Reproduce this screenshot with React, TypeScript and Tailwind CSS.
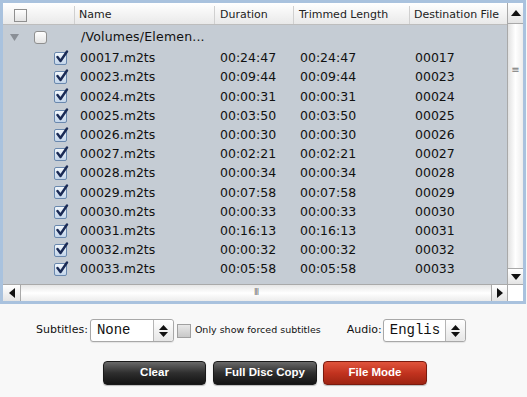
import React from "react";

const files: [string, string, string][] = [
  ["00017.m2ts", "00:24:47", "00017"],
  ["00023.m2ts", "00:09:44", "00023"],
  ["00024.m2ts", "00:00:31", "00024"],
  ["00025.m2ts", "00:03:50", "00025"],
  ["00026.m2ts", "00:00:30", "00026"],
  ["00027.m2ts", "00:02:21", "00027"],
  ["00028.m2ts", "00:00:34", "00028"],
  ["00029.m2ts", "00:07:58", "00029"],
  ["00030.m2ts", "00:00:33", "00030"],
  ["00031.m2ts", "00:16:13", "00031"],
  ["00032.m2ts", "00:00:32", "00032"],
  ["00033.m2ts", "00:05:58", "00033"],
];

function Tri({ dir }: { dir: "up" | "down" | "left" | "right" }) {
  const pts = {
    up: "0,7 5,1 10,7",
    down: "0,1 10,1 5,7",
    left: "7,0 7,10 1,5",
    right: "1,0 1,10 7,5",
  }[dir];
  const vert = dir === "up" || dir === "down";
  return (
    <svg width={vert ? 10 : 8} height={vert ? 8 : 10} viewBox={vert ? "0 0 10 8" : "0 0 8 10"}>
      <polygon points={pts} fill="#111" />
    </svg>
  );
}

function Check() {
  return (
    <div className="w-[13px] h-[13px] rounded-[2px] border border-[#6a88ae] bg-gradient-to-b from-[#f2f7fc] to-[#c3d5ea] relative">
      <svg className="absolute -top-[3px] left-[0px]" width="14" height="14" viewBox="0 0 14 14">
        <path d="M2.5 7 L5.5 11 L12 1.5" stroke="#1a2a55" strokeWidth="2.4" fill="none" strokeLinecap="round" strokeLinejoin="round" />
      </svg>
    </div>
  );
}

function Box({ round }: { round?: boolean }) {
  return (
    <div
      className={`w-[13px] h-[13px] border border-[#8f8f8f] bg-gradient-to-b from-white to-[#e4e4e4] ${
        round ? "rounded-[3px]" : ""
      }`}
    />
  );
}

function Stepper() {
  return (
    <div className="w-[20px] h-full border-l border-[#b5b5b5] flex flex-col items-center justify-center gap-[2px] bg-gradient-to-b from-white to-[#e6e6e6] rounded-r-[3px]">
      <svg width="9" height="5" viewBox="0 0 9 5">
        <polygon points="0,5 4.5,0 9,5" fill="#111" />
      </svg>
      <svg width="9" height="5" viewBox="0 0 9 5">
        <polygon points="0,0 9,0 4.5,5" fill="#111" />
      </svg>
    </div>
  );
}

function Select({ value, w }: { value: string; w: string }) {
  return (
    <div className={`${w} h-[23px] flex border border-[#a8a8a8] rounded-[3px] bg-white shadow-[0_1px_1px_rgba(0,0,0,0.08)]`}>
      <div className="flex-1 pl-[6px] flex items-center text-[14px] text-[#111] font-['Liberation_Mono',monospace]">
        {value}
      </div>
      <Stepper />
    </div>
  );
}

export default function App() {
  return (
    <div className="w-[527px] h-[397px] bg-[#f8f8f8] font-['DejaVu_Sans',sans-serif] overflow-hidden">
      <div className="w-[526px] h-[304px] border-[3px] border-[#a9c2de] bg-white flex flex-col">
        <div className="flex h-[281px]">
          {/* table */}
          <div className="w-[504px] flex flex-col">
            <div className="h-[22px] pt-[3px] flex bg-gradient-to-b from-white to-[#e9e9e9] border-b border-[#bdbdbd] text-[11px] text-[#222]">
              <div className="w-[72px] border-r border-[#d0d0d0] pl-[11px] flex items-center">
                <Box />
              </div>
              <div className="w-[140px] border-r border-[#d0d0d0] pl-[4px] flex items-center">Name</div>
              <div className="w-[79px] border-r border-[#d0d0d0] pl-[5px] flex items-center">Duration</div>
              <div className="w-[116px] border-r border-[#d0d0d0] pl-[5px] flex items-center">Trimmed Length</div>
              <div className="flex-1 pl-[4px] flex items-center">Destination File</div>
            </div>
            <div className="flex-1 pt-[1px] bg-[#c5ccd4] text-[12.5px] text-[#111] overflow-hidden">
              <div className="h-[23px] flex items-center">
                <div className="w-[72px] flex items-center">
                  <svg className="ml-[7px]" width="9" height="7" viewBox="0 0 9 7">
                    <polygon points="0,0 9,0 4.5,7" fill="#8a8f96" />
                  </svg>
                  <div className="ml-[15px]">
                    <Box round />
                  </div>
                </div>
                <div className="pl-[6px] tracking-[0.2px]">/Volumes/Elemen...</div>
              </div>
              {files.map(([name, dur, dest]) => (
                <div key={name} className="h-[19.2px] flex items-center">
                  <div className="w-[72px] pl-[51px] flex items-center">
                    <Check />
                  </div>
                  <div className="w-[140px] pl-[5px]">{name}</div>
                  <div className="w-[79px] pl-[5px]">{dur}</div>
                  <div className="w-[116px] pl-[6px]">{dur}</div>
                  <div className="flex-1 pl-[5px]">{dest}</div>
                </div>
              ))}
            </div>
          </div>
          {/* vertical scrollbar */}
          <div className="w-[16px] flex flex-col border-l border-[#a9a9a9]">
            <div className="h-[21px] flex items-center justify-center bg-gradient-to-b from-white to-[#e4e4e4] border-b border-[#a9a9a9]">
              <Tri dir="up" />
            </div>
            <div className="flex-1 bg-gradient-to-r from-[#e2e2e2] via-white to-[#ececec] flex justify-center pt-[41px]">
              <div className="text-[10px] leading-none text-[#777]">≡</div>
            </div>
            <div className="h-[16px] flex items-center justify-center bg-gradient-to-b from-white to-[#e4e4e4] border-t border-[#a9a9a9]">
              <Tri dir="down" />
            </div>
          </div>
        </div>
        {/* horizontal scrollbar */}
        <div className="h-[17px] flex border-t border-[#a9a9a9]">
          <div className="w-[504px] flex">
            <div className="w-[18px] flex items-center justify-center bg-gradient-to-b from-white to-[#e4e4e4] border-r border-[#a9a9a9]">
              <Tri dir="left" />
            </div>
            <div className="flex-1 bg-gradient-to-b from-[#e6e6e6] via-white to-[#ececec] flex items-center justify-center">
              <div className="text-[8px] leading-none text-[#777] tracking-[-1px]">III</div>
            </div>
            <div className="w-[16px] flex items-center justify-center bg-gradient-to-b from-white to-[#e4e4e4] border-l border-[#a9a9a9]">
              <Tri dir="right" />
            </div>
          </div>
          <div className="flex-1 bg-white border-l border-[#a9a9a9]" />
        </div>
      </div>

      {/* controls */}
      <div className="flex items-center h-[23px] mt-[15px] pl-[36px] text-[11px] text-[#111]">
        <span>Subtitles:</span>
        <div className="ml-[2px]">
          <Select value="None" w="w-[84px]" />
        </div>
        <div className="ml-[3px] w-[14px] h-[14px] border border-[#a0a0a0] bg-gradient-to-b from-[#e8e8e8] to-[#c8c8c8]" />
        <span className="ml-[4px] text-[9.5px]">Only show forced subtitles</span>
        <span className="ml-[26px]">Audio:</span>
        <div className="ml-[1px]">
          <Select value="Englis" w="w-[83px]" />
        </div>
      </div>
      <div className="flex mt-[19px] pl-[103px] gap-[7px] font-['Liberation_Sans',sans-serif] text-[11.5px] font-bold text-white">
        <div className="w-[103px] h-[24px] rounded-[4px] border border-[#1a1a1a] bg-gradient-to-b from-[#6a6a6a] via-[#2e2e2e] to-[#141414] flex items-center justify-center shadow-[0_1px_1px_rgba(0,0,0,0.25)]">
          Clear
        </div>
        <div className="w-[104px] h-[24px] rounded-[4px] border border-[#1a1a1a] bg-gradient-to-b from-[#6a6a6a] via-[#2e2e2e] to-[#141414] flex items-center justify-center shadow-[0_1px_1px_rgba(0,0,0,0.25)]">
          Full Disc Copy
        </div>
        <div className="ml-[-1px] w-[104px] h-[24px] rounded-[4px] border border-[#7a1a0e] bg-gradient-to-b from-[#e0543c] via-[#c2331f] to-[#9e2412] flex items-center justify-center shadow-[0_1px_1px_rgba(0,0,0,0.25)]">
          File Mode
        </div>
      </div>
    </div>
  );
}
